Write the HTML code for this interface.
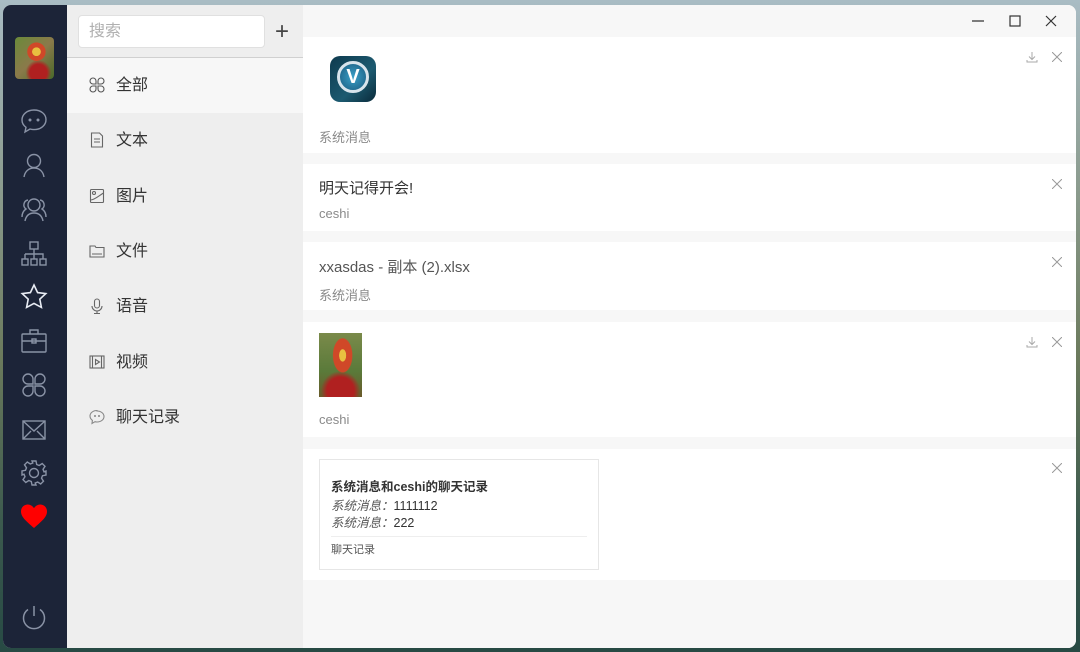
<!DOCTYPE html>
<html><head><meta charset="utf-8"><style>
*{margin:0;padding:0;box-sizing:border-box}
body{width:1080px;height:652px;overflow:hidden;position:relative;font-family:"Liberation Sans","Noto Sans CJK SC",sans-serif;background:linear-gradient(180deg,#a9bcc4 0%,#8a9a8c 30%,#6b7a5c 55%,#3c5a4e 80%,#274a44 100%)}
.win{position:absolute;left:3px;top:5px;width:1073px;height:643px;border-radius:8px;overflow:hidden;background:#f7f7f7}
.side{position:absolute;left:0;top:0;width:64px;height:643px;background:#1c2438}
.panel{position:absolute;left:64px;top:0;width:236px;height:643px;background:#eeeeee}
.main{position:absolute;left:300px;top:0;width:773px;height:643px;background:#f7f7f7}
.ico{position:absolute;left:17px}
.search{position:absolute;left:11px;top:10px;width:187px;height:33px;background:#fff;border:1px solid #e0e0e0;border-radius:4px;color:#b0b0b0;font-size:16px;line-height:31px;padding-left:10px}
.plus{position:absolute;left:208px;top:13px;font-size:24px;color:#444;font-weight:300}
.sep{position:absolute;left:0;top:52px;width:236px;height:1px;background:#d0d0d0}
.item{position:absolute;left:0;width:236px;height:55px;font-size:16px;color:#333;line-height:55px;padding-left:49px}
.item svg{position:absolute;left:22px;top:19px}
.card{position:absolute;left:0;width:773px;background:#fff}
.sub{position:absolute;left:16px;font-size:13px;color:#8a8a8a}
.x{position:absolute;right:14px;width:10px;height:10px}
.dl{position:absolute;right:38px;width:12px;height:12px}
</style></head><body>
<div class="win">
<div class="side">
 <div style="position:absolute;left:12px;top:32px;width:39px;height:42px;border-radius:4px;background:radial-gradient(circle at 55% 35%,#e8c040 0 12%,#d04828 13% 26%,transparent 27%),radial-gradient(circle at 60% 85%,#b02020 0 20%,transparent 30%),linear-gradient(135deg,#6a8a3a,#8a7a4a 50%,#4a6a2a)"></div>
 <svg class="ico" style="top:103px" width="28" height="26" viewBox="0 0 28 26" fill="none" stroke="#8a93a6" stroke-width="1.4"><path d="M14 2C7 2 2 6.5 2 12c0 3 1.5 5.5 4 7.3L5 24l5-3c1.3.4 2.6.6 4 .6 7 0 12-4.5 12-10S21 2 14 2z"/><circle cx="10" cy="12" r=".8" fill="#8a93a6"/><circle cx="18" cy="12" r=".8" fill="#8a93a6"/></svg>
 <svg class="ico" style="top:147px" width="28" height="26" viewBox="0 0 28 26" fill="none" stroke="#8a93a6" stroke-width="1.4"><circle cx="14" cy="9" r="6.5"/><path d="M4 25c1-6 5-9 10-9s9 3 10 9"/></svg>
 <svg class="ico" style="top:191px" width="28" height="26" viewBox="0 0 28 26" fill="none" stroke="#8a93a6" stroke-width="1.4"><circle cx="14" cy="9" r="6"/><path d="M5 25c1-5 4-8 9-8s8 3 9 8M8 4a5 5 0 0 0-2 9c-3 2-4 5-4 8M20 4a5 5 0 0 1 2 9c3 2 4 5 4 8"/></svg>
 <svg class="ico" style="top:235px" width="28" height="28" viewBox="0 0 28 28" fill="none" stroke="#8a93a6" stroke-width="1.4"><rect x="10" y="2" width="8" height="7"/><path d="M14 9v5M5 14h18v5M5 14v5M14 14v5"/><rect x="2" y="19" width="6" height="6"/><rect x="11" y="19" width="6" height="6"/><rect x="20" y="19" width="6" height="6"/></svg>
 <svg class="ico" style="top:278px" width="28" height="28" viewBox="0 0 28 28" fill="none" stroke="#e8ecf4" stroke-width="1.6"><path d="M14 2l3.6 7.6 8.2 1-6 5.6 1.6 8.2L14 20.4l-7.4 4 1.6-8.2-6-5.6 8.2-1z"/></svg>
 <svg class="ico" style="top:323px" width="28" height="26" viewBox="0 0 28 26" fill="none" stroke="#8a93a6" stroke-width="1.4"><rect x="2" y="6" width="24" height="18" rx="1"/><path d="M10 6V2h8v4M2 13h24"/><rect x="12" y="11" width="4" height="4"/></svg>
 <svg class="ico" style="top:367px" width="28" height="26" viewBox="0 0 28 26" fill="none" stroke="#8a93a6" stroke-width="1.4"><path d="M13 12H8a5 5 0 1 1 5-5zM15 12h5a5 5 0 1 0-5-5zM13 14H8a5 5 0 1 0 5 5zM15 14h5a5 5 0 1 1-5 5z"/></svg>
 <svg class="ico" style="top:413px" width="28" height="24" viewBox="0 0 28 24" fill="none" stroke="#8a93a6" stroke-width="1.4"><rect x="3" y="3" width="22" height="18"/><path d="M3 3l11 10 11-10M3 21l8-8M25 21l-8-8"/></svg>
 <svg class="ico" style="top:454px" width="28" height="28" viewBox="0 0 28 28" fill="none" stroke="#8a93a6" stroke-width="1.4"><circle cx="14" cy="14" r="4.5"/><path d="M12 2h4l.7 3.5 2.5 1 3-2 2.8 2.8-2 3 1 2.5L26 12v4l-3.5.7-1 2.5 2 3-2.8 2.8-3-2-2.5 1L16 26h-4l-.7-3.5-2.5-1-3 2-2.8-2.8 2-3-1-2.5L2 16v-4l3.5-.7 1-2.5-2-3 2.8-2.8 3 2 2.5-1z"/></svg>
 <svg class="ico" style="top:498px" width="28" height="26" viewBox="0 0 28 26"><path d="M14 25C6 18 1 14 1 8.5 1 4.5 4 1.5 7.7 1.5c2.6 0 4.8 1.5 6.3 3.6 1.5-2.1 3.7-3.6 6.3-3.6 3.7 0 6.7 3 6.7 7C27 14 22 18 14 25z" fill="#ff0000"/></svg>
 <svg class="ico" style="top:599px" width="28" height="28" viewBox="0 0 28 28" fill="none" stroke="#8a93a6" stroke-width="1.5"><path d="M14 2v10M8 5.5a10.5 10.5 0 1 0 12 0"/></svg>
</div>
<div class="panel">
 <div class="search">搜索</div>
 <div class="plus">+</div>
 <div class="sep"></div>
 <div class="item" style="top:53px;background:#f7f7f7"><svg width="16" height="16" viewBox="0 0 16 16" fill="none" stroke="#555" stroke-width="1.1"><path d="M7 7H4a3 3 0 1 1 3-3zM9 7h3a3 3 0 1 0-3-3zM7 9H4a3 3 0 1 0 3 3zM9 9h3a3 3 0 1 1-3 3z"/></svg>全部</div>
 <div class="item" style="top:108px"><svg width="16" height="16" viewBox="0 0 16 16" fill="none" stroke="#666" stroke-width="1.1"><path d="M2.5 1h8l3 3v11h-11zM5 7h6M5 10h6"/></svg>文本</div>
 <div class="item" style="top:164px"><svg width="16" height="16" viewBox="0 0 16 16" fill="none" stroke="#666" stroke-width="1.1"><rect x="1.5" y="1.5" width="13" height="13" rx="1"/><circle cx="5" cy="5" r="1.5"/><path d="M1.5 12c4 0 8-4 13-7"/></svg>图片</div>
 <div class="item" style="top:219px"><svg width="16" height="16" viewBox="0 0 16 16" fill="none" stroke="#666" stroke-width="1.1"><path d="M1 3h5l1 1.5h8V14H1zM3 11h10"/></svg>文件</div>
 <div class="item" style="top:274px"><svg width="16" height="16" viewBox="0 0 16 16" fill="none" stroke="#666" stroke-width="1.1"><rect x="5.5" y="1" width="5" height="9" rx="2.5"/><path d="M3 8a5 5 0 0 0 10 0M8 13v2.5M5 15.5h6"/></svg>语音</div>
 <div class="item" style="top:330px"><svg width="16" height="16" viewBox="0 0 16 16" fill="none" stroke="#666" stroke-width="1.1"><rect x="1" y="2" width="14" height="12"/><path d="M3.5 2v12M12.5 2v12M6.5 5.5v5l4-2.5z"/></svg>视频</div>
 <div class="item" style="top:385px"><svg width="16" height="16" viewBox="0 0 16 16" fill="none" stroke="#888" stroke-width="1.1"><path d="M8 1.5C4 1.5 1 4 1 7c0 1.8.9 3.3 2.4 4.3L3 14.5l3-1.8c.6.2 1.3.3 2 .3 4 0 7-2.5 7-5.5s-3-5.5-7-5.5z"/><circle cx="6" cy="7" r=".5" fill="#888"/><circle cx="10" cy="7" r=".5" fill="#888"/></svg>聊天记录</div>
</div>
<div class="main">
 <svg style="position:absolute;right:15px;top:9px" width="90" height="14" viewBox="0 0 90 14" fill="none" stroke="#333" stroke-width="1.2"><path d="M1 7h12"/><rect x="39" y="2" width="10" height="10"/><path d="M75 2l10 10M85 2L75 12"/></svg>
 <div class="card" style="top:32px;height:116px">
  <div style="position:absolute;left:27px;top:19px;width:46px;height:46px;border-radius:10px;background:linear-gradient(135deg,#0e3a4e,#1c5a70 60%,#0a2a3a)"><div style="position:absolute;left:7px;top:5px;width:32px;height:32px;border-radius:50%;border:3px solid #d8e4ec;background:radial-gradient(circle,#3aa0c8,#1a5a7e);color:#fff;font-weight:bold;font-size:20px;text-align:center;line-height:26px">V</div></div>
  <div class="sub" style="top:90px">系统消息</div>
  <svg class="dl" style="top:14px" viewBox="0 0 12 12" fill="none" stroke="#aaa"><path d="M6 1v7M3 5.5L6 8.5 9 5.5M1 9v2h10V9"/></svg>
  <svg class="x" style="top:15px" viewBox="0 0 10 10" stroke="#999"><path d="M0 0l10 10M10 0L0 10"/></svg>
 </div>
 <div class="card" style="top:159px;height:67px">
  <div style="position:absolute;left:16px;top:13px;font-size:15px;color:#333">明天记得开会!</div>
  <div class="sub" style="top:42px">ceshi</div>
  <svg class="x" style="top:15px" viewBox="0 0 10 10" stroke="#999"><path d="M0 0l10 10M10 0L0 10"/></svg>
 </div>
 <div class="card" style="top:237px;height:68px">
  <div style="position:absolute;left:16px;top:14px;font-size:15px;color:#555">xxasdas - 副本 (2).xlsx</div>
  <div class="sub" style="top:43px">系统消息</div>
  <svg class="x" style="top:15px" viewBox="0 0 10 10" stroke="#999"><path d="M0 0l10 10M10 0L0 10"/></svg>
 </div>
 <div class="card" style="top:317px;height:115px">
  <div style="position:absolute;left:16px;top:11px;width:43px;height:64px;background:radial-gradient(ellipse at 55% 35%,#e8c040 0 10%,#d04828 11% 28%,transparent 30%),radial-gradient(circle at 50% 90%,#b02020 0 22%,transparent 32%),linear-gradient(180deg,#7a8a4a,#5a7a3a 60%,#6a5a2a)"></div>
  <div class="sub" style="top:90px">ceshi</div>
  <svg class="dl" style="top:14px" viewBox="0 0 12 12" fill="none" stroke="#aaa"><path d="M6 1v7M3 5.5L6 8.5 9 5.5M1 9v2h10V9"/></svg>
  <svg class="x" style="top:15px" viewBox="0 0 10 10" stroke="#999"><path d="M0 0l10 10M10 0L0 10"/></svg>
 </div>
 <div class="card" style="top:444px;height:131px">
  <div style="position:absolute;left:16px;top:10px;width:280px;height:111px;border:1px solid #e6e6e6">
   <div style="position:absolute;left:11px;top:16px;font-size:12.5px;font-weight:bold;color:#333">系统消息和ceshi的聊天记录</div>
   <div style="position:absolute;left:11px;top:38px;font-size:12.5px;color:#333;line-height:17px"><i style="color:#555">系统消息：</i>1111112<br><i style="color:#555">系统消息：</i>222</div>
   <div style="position:absolute;left:11px;right:11px;top:76px;height:1px;background:#eee"></div>
   <div style="position:absolute;left:11px;top:81px;font-size:11px;color:#555">聊天记录</div>
  </div>
  <svg class="x" style="top:14px" viewBox="0 0 10 10" stroke="#999"><path d="M0 0l10 10M10 0L0 10"/></svg>
 </div>
</div>
</div>
</body></html>
